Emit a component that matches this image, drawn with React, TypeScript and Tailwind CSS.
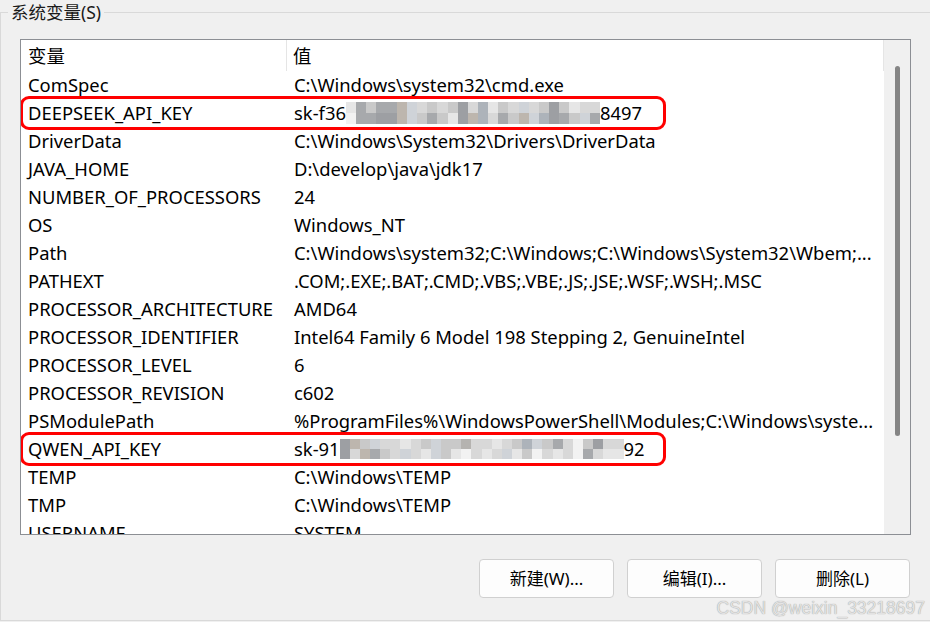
import React from 'react'

// Blurred-out cells of the API keys, two rows each
const shades = [
  'bg-[#a7a9ac]',
  'bg-[#b5b3b0]',
  'bg-[#c9c9c9]',
  'bg-[#d8d8d8]',
  'bg-[#e6e6e6]',
  'bg-[#9d9fa3]',
  'bg-[#bdb6ae]',
  'bg-[#cfd3d8]',
  'bg-[#f2f2f2]',
  'bg-[#adb3ba]',
]

const deepseekCells = [
  [4, 0, 2, 0, 0, 6, 7, 3, 2, 3, 2, 5, 3, 9, 4, 2, 3, 7, 3, 2, 5, 2, 4, 3, 3],
  [8, 0, 0, 5, 5, 6, 7, 2, 0, 2, 4, 5, 6, 9, 3, 0, 2, 6, 7, 9, 5, 0, 2, 7, 0],
]

const qwenCells = [
  [5, 6, 2, 7, 3, 3, 4, 3, 2, 7, 2, 2, 1, 3, 3, 4, 3, 2, 9, 7, 2, 0, 3, 8, 2, 5, 3, 3],
  [5, 3, 6, 0, 2, 3, 7, 3, 4, 7, 2, 4, 8, 3, 4, 3, 7, 4, 2, 8, 3, 4, 3, 8, 0, 3, 4, 4],
]

function Mosaic({ cells, width, height, cols }: { cells: number[][]; width: string; height: string; cols: string }) {
  return (
    <span className={`grid shrink-0 ${width} ${height} ${cols} grid-rows-2`}>
      {cells.flatMap((row, r) =>
        row.map((c, i) => <span key={`${r}-${i}`} className={shades[c]} />)
      )}
    </span>
  )
}

interface Row {
  name: string
  value: React.ReactNode
  marked?: boolean
}

const rows: Row[] = [
  { name: 'ComSpec', value: 'C:\\Windows\\system32\\cmd.exe' },
  {
    name: 'DEEPSEEK_API_KEY',
    marked: true,
    value: (
      <>
        <span>sk-f36</span>
        <Mosaic cells={deepseekCells} width="w-[254px]" height="h-[22px]" cols="grid-cols-[repeat(25,1fr)]" />
        <span>8497</span>
      </>
    ),
  },
  { name: 'DriverData', value: 'C:\\Windows\\System32\\Drivers\\DriverData' },
  { name: 'JAVA_HOME', value: 'D:\\develop\\java\\jdk17' },
  { name: 'NUMBER_OF_PROCESSORS', value: '24' },
  { name: 'OS', value: 'Windows_NT' },
  { name: 'Path', value: 'C:\\Windows\\system32;C:\\Windows;C:\\Windows\\System32\\Wbem;...' },
  { name: 'PATHEXT', value: '.COM;.EXE;.BAT;.CMD;.VBS;.VBE;.JS;.JSE;.WSF;.WSH;.MSC' },
  { name: 'PROCESSOR_ARCHITECTURE', value: 'AMD64' },
  { name: 'PROCESSOR_IDENTIFIER', value: 'Intel64 Family 6 Model 198 Stepping 2, GenuineIntel' },
  { name: 'PROCESSOR_LEVEL', value: '6' },
  { name: 'PROCESSOR_REVISION', value: 'c602' },
  { name: 'PSModulePath', value: '%ProgramFiles%\\WindowsPowerShell\\Modules;C:\\Windows\\syste...' },
  {
    name: 'QWEN_API_KEY',
    marked: true,
    value: (
      <>
        <span>sk-91</span>
        <Mosaic cells={qwenCells} width="w-[284px]" height="h-[20px]" cols="grid-cols-[repeat(28,1fr)]" />
        <span>92</span>
      </>
    ),
  },
  { name: 'TEMP', value: 'C:\\Windows\\TEMP' },
  { name: 'TMP', value: 'C:\\Windows\\TEMP' },
  { name: 'USERNAME', value: 'SYSTEM' },
]

function DialogButton({ label }: { label: string }) {
  return (
    <button className="h-[39px] w-[135px] rounded-[4px] border border-[#d0d0d0] bg-[#fdfdfd] text-[17px] text-black">
      {label}
    </button>
  )
}

export default function App() {
  return (
    <div className="relative h-[622px] w-[930px] overflow-hidden bg-[#f0f0f0] pt-[12px] font-['Noto_Sans','Noto_Sans_CJK_SC',sans-serif] text-black">
      {/* group box */}
      <div className="relative h-[609px] border-t border-b border-l border-[#d9d9d9] pl-[19px] pt-[26px]">
        <span className="absolute -top-[13px] left-[7px] bg-[#f0f0f0] px-[3px] text-[17.5px] leading-[24px] text-[#1a1a1a]">
          系统变量(S)
        </span>

        {/* list view */}
        <div className="flex h-[496px] w-[891px] border border-[#8c8f94] bg-white">
          <div className="flex min-w-0 flex-1 flex-col overflow-hidden text-[18.4px] leading-[28px]">
            <div className="flex h-[31px] shrink-0 items-center">
              <div className="flex h-full w-[266px] items-center border-r border-[#e5e5e5] pl-[7px]">变量</div>
              <div className="flex h-full flex-1 items-center border-r border-[#e5e5e5] pl-[6px]">值</div>
            </div>
            {rows.map((row) => (
              <div key={row.name} className="relative flex h-[28px] shrink-0 items-center whitespace-nowrap">
                <div className="w-[266px] shrink-0 pl-[7px]">{row.name}</div>
                <div className="flex min-w-0 flex-1 items-center overflow-hidden pl-[7px]">{row.value}</div>
                {row.marked && (
                  <span className="absolute -left-[1px] -top-[3px] h-[34px] w-[646px] rounded-[9px] border-[3px] border-[#ff0000]" />
                )}
              </div>
            ))}
          </div>

          {/* scrollbar */}
          <div className="flex w-[26px] shrink-0 justify-center bg-[#f0f0f0] pt-[26px]">
            <div className="h-[370px] w-[5px] rounded-full bg-[#858585]" />
          </div>
        </div>

        <div className="mt-[24px] flex w-[890px] justify-end gap-[13px]">
          <DialogButton label="新建(W)..." />
          <DialogButton label="编辑(I)..." />
          <DialogButton label="删除(L)" />
        </div>
      </div>

      {/* watermark */}
      <span className="absolute bottom-[4px] right-[5px] font-['Liberation_Sans',sans-serif] text-[17.5px] leading-[20px] text-[#e2e2e2] [text-shadow:0_0_1px_#8a8a8a]">
        CSDN @weixin_33218697
      </span>
    </div>
  )
}
